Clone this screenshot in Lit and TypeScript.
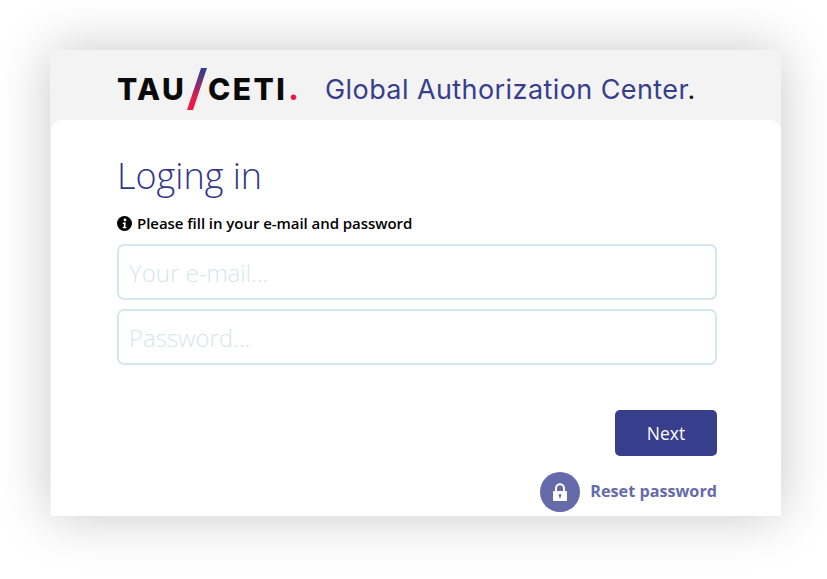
import { LitElement, html, css } from 'lit';
import { customElement } from 'lit/decorators.js';

@customElement('app-root')
export class AppRoot extends LitElement {
  static styles = css`
    :host {
      display: block;
      width: 827px;
      height: 579px;
      padding: 50px 46px 63px 50px;
      box-sizing: border-box;
      background: #fff;
      font-family: 'Open Sans', 'Noto Sans', sans-serif;
    }

    .window {
      height: 466px;
      background: #f3f3f3;
      box-shadow: 0 0 50px rgba(0, 0, 0, 0.22);
      display: flex;
      flex-direction: column;
    }

    .header {
      height: 70px;
      flex: none;
      padding: 8px 0 0 67px;
      display: flex;
      align-items: center;
      box-sizing: border-box;
    }

    .logo {
      display: flex;
      align-items: center;
      width: 208px;
      font-family: 'Inter', sans-serif;
      font-weight: 800;
      font-size: 30px;
      letter-spacing: 2.4px;
      color: #0a0a0a;
      line-height: 1;
    }

    .logo svg {
      display: block;
      flex: none;
      margin: 0 0 0 1px;
    }

    .logo .dot {
      color: #e8184c;
      margin-left: 1px;
    }

    .tagline {
      font-family: 'Inter', sans-serif;
      font-size: 27px;
      font-weight: 400;
      color: #373e8c;
      letter-spacing: 0.42px;
    }

    .tagline span {
      color: #111;
    }

    .body {
      flex: 1;
      background: #fff;
      border-radius: 10px 10px 0 0;
      margin-left: 1px;
      padding: 32px 64px 0 66px;
      display: flex;
      flex-direction: column;
    }

    h1 {
      margin: 0;
      font-size: 36px;
      line-height: 48px;
      font-weight: 300;
      color: #30368a;
    }

    .hint {
      margin-top: 12px;
      display: flex;
      align-items: center;
      gap: 5px;
      font-size: 15px;
      line-height: 22px;
      font-weight: 600;
      letter-spacing: -0.05px;
      color: #000;
    }

    .field {
      height: 56px;
      box-sizing: border-box;
      border: 2px solid #d6e6ed;
      border-radius: 7px;
      padding: 0 10px;
      display: block;
      width: 100%;
      font: 300 24px 'Open Sans', sans-serif;
      color: #333;
      background: #fff;
      outline: none;
    }

    .field::placeholder {
      color: #d6e6ed;
      opacity: 1;
    }

    .fields {
      margin-top: 10px;
      display: flex;
      flex-direction: column;
      gap: 9px;
    }

    .actions {
      margin-top: 45px;
      display: flex;
      flex-direction: column;
      align-items: flex-end;
      gap: 16px;
    }

    .next {
      width: 102px;
      height: 46px;
      border: none;
      border-radius: 5px;
      background: #373e8c;
      color: #fff;
      font: 400 17.5px 'Open Sans', sans-serif;
    }

    .reset {
      display: flex;
      align-items: center;
      gap: 10px;
      color: #666aa9;
      font-size: 16.2px;
      font-weight: 700;
    }

    .reset .label {
      margin-bottom: 2px;
    }

    .reset .circle {
      width: 40px;
      height: 40px;
      border-radius: 50%;
      background: #666aa9;
      display: flex;
      align-items: center;
      justify-content: center;
    }
  `;

  render() {
    return html`
      <div class="window">
        <div class="header">
          <div class="logo">
            TAU
            <svg width="21" height="42" viewBox="0 0 21 42">
              <defs>
                <linearGradient id="slash" x1="0" y1="0" x2="0" y2="1">
                  <stop offset="0.1" stop-color="#373e8c" />
                  <stop offset="0.75" stop-color="#ee1848" />
                </linearGradient>
              </defs>
              <polygon points="14,0 20,0 6,42 0,42" fill="url(#slash)" />
            </svg>
            CETI<span class="dot">.</span>
          </div>
          <div class="tagline">Global Authorization Center<span>.</span></div>
        </div>
        <div class="body">
          <h1>Loging in</h1>
          <div class="hint">
            <svg width="15" height="15" viewBox="0 0 16 16">
              <circle cx="8" cy="8" r="8" fill="#000" />
              <circle cx="8.5" cy="4.2" r="1.5" fill="#fff" />
              <path d="M6.2 7h3.2l-.5 4.6h1.2l-.1 1.4H6l.2-1.4h.9l.3-3.2H6.1z" fill="#fff" />
            </svg>
            Please fill in your e-mail and password
          </div>
          <div class="fields">
            <input class="field" placeholder="Your e-mail..." />
            <input class="field" placeholder="Password..." />
          </div>
          <div class="actions">
            <button class="next">Next</button>
            <div class="reset">
              <div class="circle">
                <svg width="16" height="19" viewBox="0 0 16 19">
                  <path d="M4 8V5.2a4 4 0 0 1 8 0V8" fill="none" stroke="#fff" stroke-width="2" />
                  <path fill-rule="evenodd" fill="#fff"
                    d="M2 8h12a1 1 0 0 1 1 1v8a1 1 0 0 1-1 1H2a1 1 0 0 1-1-1V9a1 1 0 0 1 1-1zM8 11a1.4 1.4 0 0 0-.7 2.6V15h1.4v-1.4A1.4 1.4 0 0 0 8 11z" />
                </svg>
              </div>
              <span class="label">Reset password</span>
            </div>
          </div>
        </div>
      </div>
    `;
  }
}

declare global {
  interface HTMLElementTagNameMap {
    'app-root': AppRoot;
  }
}
